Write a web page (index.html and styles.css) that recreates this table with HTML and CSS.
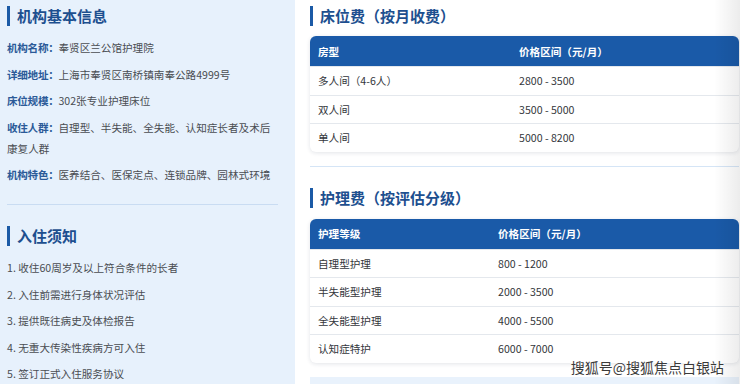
FILE: index.html
```html
<!DOCTYPE html>
<html lang="zh-CN">
<head>
<meta charset="utf-8">
<title>机构信息</title>
<link rel="stylesheet" href="styles.css">
</head>
<body>
<div class="page">
  <aside class="side">
    <h2 class="title">机构基本信息</h2>
    <div class="info">
      <p><span class="label">机构名称：</span>奉贤区兰公馆护理院</p>
      <p><span class="label">详细地址：</span>上海市奉贤区南桥镇南奉公路4999号</p>
      <p><span class="label">床位规模：</span>302张专业护理床位</p>
      <p><span class="label">收住人群：</span>自理型、半失能、全失能、认知症长者及术后康复人群</p>
      <p><span class="label">机构特色：</span>医养结合、医保定点、连锁品牌、园林式环境</p>
    </div>
    <div class="divider"></div>
    <h2 class="title title-2">入住须知</h2>
    <div class="rules">
      <p>1. 收住60周岁及以上符合条件的长者</p>
      <p>2. 入住前需进行身体状况评估</p>
      <p>3. 提供既往病史及体检报告</p>
      <p>4. 无重大传染性疾病方可入住</p>
      <p>5. 签订正式入住服务协议</p>
    </div>
  </aside>
  <main class="main">
    <h2 class="title">床位费（按月收费）</h2>
    <div class="card">
      <div class="row head"><span class="c1 w1">房型</span><span>价格区间（元/月）</span></div>
      <div class="row"><span class="c1 w1">多人间（4-6人）</span><span>2800 - 3500</span></div>
      <div class="row"><span class="c1 w1">双人间</span><span>3500 - 5000</span></div>
      <div class="row"><span class="c1 w1">单人间</span><span>5000 - 8200</span></div>
    </div>
    <div class="divider wide"></div>
    <h2 class="title title-3">护理费（按评估分级）</h2>
    <div class="card">
      <div class="row head"><span class="c1 w2">护理等级</span><span>价格区间（元/月）</span></div>
      <div class="row"><span class="c1 w2">自理型护理</span><span>800 - 1200</span></div>
      <div class="row"><span class="c1 w2">半失能型护理</span><span>2000 - 3500</span></div>
      <div class="row"><span class="c1 w2">全失能型护理</span><span>4000 - 5500</span></div>
      <div class="row"><span class="c1 w2">认知症特护</span><span>6000 - 7000</span></div>
    </div>
    <div class="band"></div>
  </main>
  <div class="fade"></div>
  <div class="watermark">搜狐号@搜狐焦点白银站</div>
</div>
</body>
</html>
```
FILE: styles.css
```css
* { box-sizing: border-box; }
html, body {
  margin: 0;
  padding: 0;
  background: #ffffff;
}
body {
  font-family: "Noto Sans CJK SC", "Noto Sans", sans-serif;
  width: 740px;
  height: 384px;
  overflow: hidden;
}
.page {
  position: relative;
  display: flex;
  width: 740px;
  height: 384px;
  overflow: hidden;
}
.side {
  width: 295px;
  flex: none;
  background: #e7f1fc;
  padding: 6px 6px 0 7px;
}
.title {
  margin: 0;
  height: 20px;
  line-height: 20px;
  border-left: 3px solid #1b5aa6;
  padding-left: 7px;
  font-size: 15px;
  font-weight: 700;
  color: #1d4f8f;
}
.info {
  margin-top: 11px;
}
.info p, .rules p {
  margin: 0 0 5.5px;
  line-height: 21px;
  font-size: 10.6px;
  color: #4a4d52;
}
.info p {
  width: 272px;
}
.label {
  font-weight: 700;
  color: #2b5a98;
  letter-spacing: -0.3px;
}
.divider {
  height: 1px;
  background: #c9dcf2;
  margin-top: 19px;
  margin-right: 11px;
}
.title-2 {
  margin-top: 21px;
}
.rules {
  margin-top: 11px;
}
.main {
  flex: 1;
  padding: 6px 1px 0 15px;
}
.card {
  margin-top: 10px;
  background: #fff;
  border-radius: 6px;
  box-shadow: 0 1px 4px rgba(30, 50, 80, 0.13);
  overflow: hidden;
}
.title-3 {
  margin-top: 21px;
}
.title-3 + .card {
  margin-top: 11px;
}
.row {
  display: flex;
  align-items: center;
  height: 28.5px;
  padding-left: 8px;
  font-size: 10.6px;
  color: #33363b;
  border-top: 1px solid #e4e8ed;
}
.row.head {
  height: 30px;
  background: #1a5aa8;
  color: #ffffff;
  font-weight: 700;
  border-top: none;
}
.c1 { flex: none; }
.w1 { width: 201px; }
.w2 { width: 180px; }
.divider.wide {
  margin-top: 14px;
  margin-right: 0;
  background: #d5e5f6;
}
.band {
  margin-top: 14px;
  height: 12px;
  background: #e9f2fc;
}
.fade {
  position: absolute;
  top: 0;
  right: 0;
  width: 26px;
  height: 384px;
  background: linear-gradient(to right, rgba(0, 0, 0, 0), rgba(0, 0, 0, 0.075));
  pointer-events: none;
}
.watermark {
  position: absolute;
  right: 16px;
  top: 357px;
  line-height: 20px;
  font-size: 14px;
  color: #3a3a3a;
  text-shadow: 0 0 2px #fff, 0 0 2px #fff, 0 0 1px #fff;
}
```
